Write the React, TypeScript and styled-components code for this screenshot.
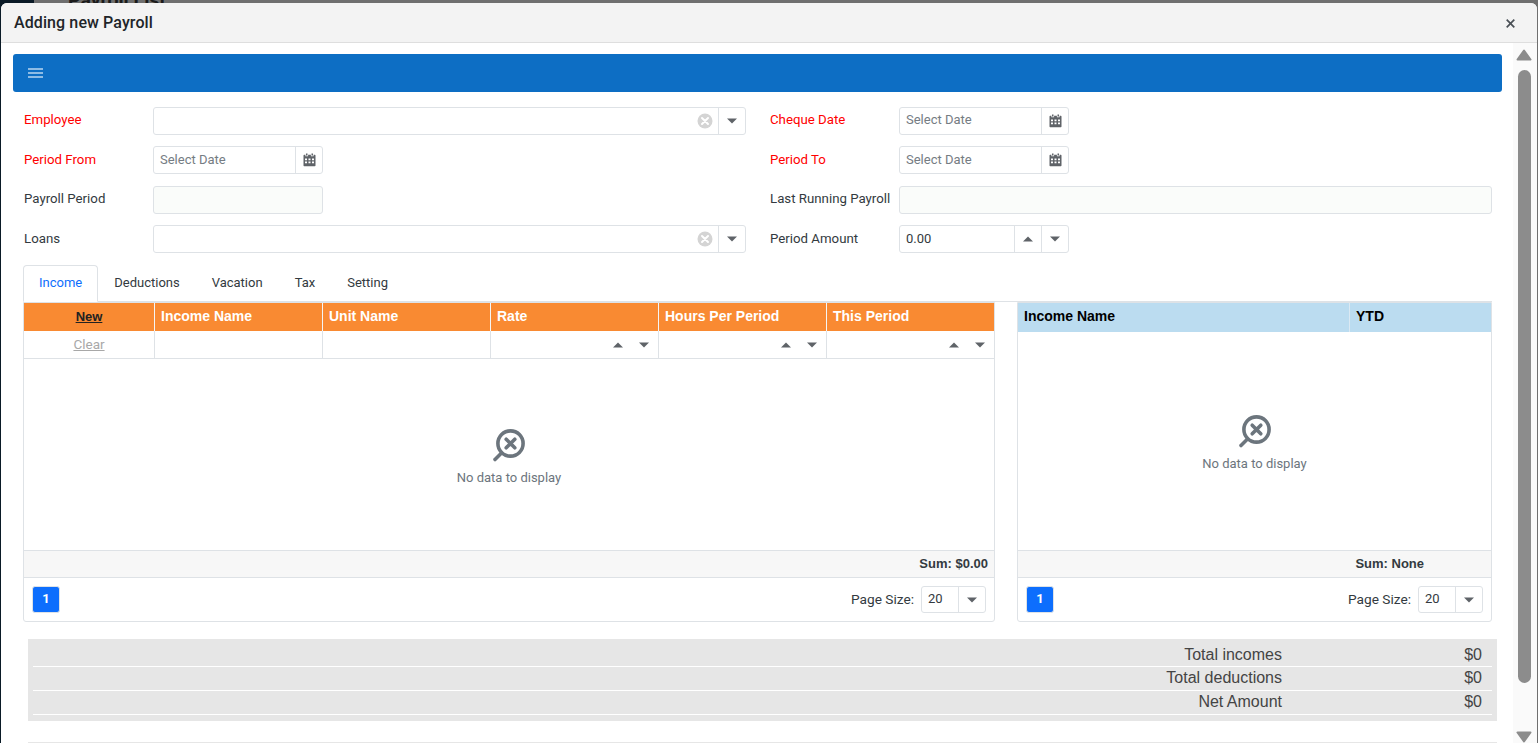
import styled, { createGlobalStyle } from "styled-components";

const GlobalStyle = createGlobalStyle`
  html, body {
    margin: 0;
    padding: 0;
    height: 100%;
    overflow: hidden;
    background-color: #6f6f6f;
    font-family: Roboto, "Liberation Sans", sans-serif;
    font-size: 13px;
    color: #333a40;
  }
  * {
    box-sizing: border-box;
  }
`;

const Caret = ({ up = false }: { up?: boolean }) => (
  <svg width="10" height="6" viewBox="0 0 10 6">
    <path d={up ? "M0 5.5 L5 0.5 L10 5.5 Z" : "M0 0.5 L10 0.5 L5 5.5 Z"} fill="#5f6368" />
  </svg>
);

const CalendarIcon = () => (
  <svg width="13" height="14" viewBox="0 0 13 14">
    <path
      d="M3 0.5h1.5v2H3zM8.5 0.5H10v2H8.5zM1.2 1.8H2.4v1.4h2.7V1.8h2.8v1.4h2.7V1.8h1.2c.4 0 .7.3.7.7v10c0 .5-.3.8-.7.8H1.2c-.4 0-.7-.3-.7-.8v-10c0-.4.3-.7.7-.7z"
      fill="#5f6368"
    />
    <path
      d="M2 5.6h2v1.7H2zM5.5 5.6h2v1.7h-2zM9 5.6h2v1.7H9zM2 8.5h2v1.7H2zM5.5 8.5h2v1.7h-2zM9 8.5h2v1.7H9z"
      fill="#ffffff"
    />
  </svg>
);

const ClearIcon = () => (
  <svg width="16" height="16" viewBox="0 0 16 16">
    <circle cx="8" cy="8" r="7.5" fill="#d4d4d4" />
    <path d="M5 5 L11 11 M11 5 L5 11" stroke="#ffffff" strokeWidth="2" strokeLinecap="round" />
  </svg>
);

const NoDataIcon = () => (
  <svg width="34" height="34" viewBox="0 0 34 34">
    <circle cx="18.5" cy="14.5" r="12.6" fill="none" stroke="#6c757d" strokeWidth="3.6" />
    <path d="M14.2 10.2 L22.8 18.8 M22.8 10.2 L14.2 18.8" stroke="#6c757d" strokeWidth="3.6" strokeLinecap="round" />
    <path d="M9.5 24 L3 30.5" stroke="#6c757d" strokeWidth="3.6" strokeLinecap="round" />
  </svg>
);

const SelectBox = () => (
  <Field $wide>
    <FieldInput />
    <ClearSlot>
      <ClearIcon />
    </ClearSlot>
    <FieldButton>
      <Caret />
    </FieldButton>
  </Field>
);

const DateBox = () => (
  <Field>
    <FieldInput>
      <Placeholder>Select Date</Placeholder>
    </FieldInput>
    <FieldButton>
      <CalendarIcon />
    </FieldButton>
  </Field>
);

const SpinCell = () => (
  <FilterCell>
    <SpinButton>
      <Caret up />
    </SpinButton>
    <SpinButton>
      <Caret />
    </SpinButton>
  </FilterCell>
);

const Pager = () => (
  <PagerRow>
    <PageButton>1</PageButton>
    <PageSize>
      <PageSizeLabel>Page Size:</PageSizeLabel>
      <PageSelect>
        <FieldInput>20</FieldInput>
        <FieldButton>
          <Caret />
        </FieldButton>
      </PageSelect>
    </PageSize>
  </PagerRow>
);

const App = () => {
  return (
    <>
      <GlobalStyle />
      <Backdrop>
        <Sidebar />
        <PageTitle>Payroll List</PageTitle>
      </Backdrop>
      <Modal>
        <ModalHeader>
          <ModalTitle>Adding new Payroll</ModalTitle>
          <CloseButton>
            <svg width="9" height="9" viewBox="0 0 9 9">
              <path d="M0.7 0.7 L8.3 8.3 M8.3 0.7 L0.7 8.3" stroke="#4a5056" strokeWidth="1.7" />
            </svg>
          </CloseButton>
        </ModalHeader>
        <ModalBody>
          <Content>
            <Toolbar>
              <svg width="15" height="10" viewBox="0 0 15 10">
                <path d="M0 1H15M0 5H15M0 9H15" stroke="#b9d6ef" strokeWidth="1.5" />
              </svg>
            </Toolbar>

            <Form>
              <FormRow>
                <Label $required>Employee</Label>
                <SelectBox />
                <Label $required>Cheque Date</Label>
                <DateBox />
              </FormRow>
              <FormRow>
                <Label $required>Period From</Label>
                <DateBox />
                <Label $required>Period To</Label>
                <DateBox />
              </FormRow>
              <FormRow>
                <Label>Payroll Period</Label>
                <ReadOnlyField />
                <Label>Last Running Payroll</Label>
                <ReadOnlyField $wide />
              </FormRow>
              <FormRow>
                <Label>Loans</Label>
                <SelectBox />
                <Label>Period Amount</Label>
                <Field>
                  <FieldInput>0.00</FieldInput>
                  <FieldButton>
                    <Caret up />
                  </FieldButton>
                  <FieldButton>
                    <Caret />
                  </FieldButton>
                </Field>
              </FormRow>
            </Form>

            <Tabs>
              <Tab $active>Income</Tab>
              <Tab>Deductions</Tab>
              <Tab>Vacation</Tab>
              <Tab>Tax</Tab>
              <Tab>Setting</Tab>
            </Tabs>

            <Grids>
              <Grid>
                <IncomeHeader>
                  <NewCell>New</NewCell>
                  <HeadCell>Income Name</HeadCell>
                  <HeadCell>Unit Name</HeadCell>
                  <HeadCell>Rate</HeadCell>
                  <HeadCell>Hours Per Period</HeadCell>
                  <HeadCell>This Period</HeadCell>
                </IncomeHeader>
                <FilterRow>
                  <ClearCell>Clear</ClearCell>
                  <FilterCell />
                  <FilterCell />
                  <SpinCell />
                  <SpinCell />
                  <SpinCell />
                </FilterRow>
                <EmptyPanel>
                  <NoDataIcon />
                  <EmptyText>No data to display</EmptyText>
                </EmptyPanel>
                <SumRow>
                  <SumText>Sum: $0.00</SumText>
                </SumRow>
                <Pager />
              </Grid>

              <Grid>
                <YtdHeader>
                  <YtdCell>Income Name</YtdCell>
                  <YtdCell>YTD</YtdCell>
                </YtdHeader>
                <EmptyPanel>
                  <NoDataIcon />
                  <EmptyText>No data to display</EmptyText>
                </EmptyPanel>
                <SumRow>
                  <YtdSum>Sum: None</YtdSum>
                </SumRow>
                <Pager />
              </Grid>
            </Grids>

            <Totals>
              <TotalRow>
                <TotalLabel>Total incomes</TotalLabel>
                <TotalValue>$0</TotalValue>
              </TotalRow>
              <TotalRow>
                <TotalLabel>Total deductions</TotalLabel>
                <TotalValue>$0</TotalValue>
              </TotalRow>
              <TotalRow>
                <TotalLabel>Net Amount</TotalLabel>
                <TotalValue>$0</TotalValue>
              </TotalRow>
            </Totals>
            <NextBar />
          </Content>

          <ScrollBar>
            <svg width="16" height="12" viewBox="0 0 16 12">
              <path d="M8 1.5 L14.5 10.5 H1.5 Z" fill="#8c8c8c" stroke="#8c8c8c" strokeWidth="2" strokeLinejoin="round" />
            </svg>
            <ScrollTrack>
              <ScrollThumb />
            </ScrollTrack>
            <svg width="16" height="12" viewBox="0 0 16 12">
              <path d="M1.5 1.5 H14.5 L8 10.5 Z" fill="#8c8c8c" stroke="#8c8c8c" strokeWidth="2" strokeLinejoin="round" />
            </svg>
          </ScrollBar>
        </ModalBody>
      </Modal>
    </>
  );
};

export default App;

const Backdrop = styled.div`
  display: flex;
  height: 743px;
  background-color: #6f6f6f;
`;

const Sidebar = styled.div`
  width: 34px;
  background-color: #0a1a26;
`;

const PageTitle = styled.div`
  margin: -11px 0 0 34px;
  font-size: 19.5px;
  font-weight: 700;
  line-height: 24px;
  color: #1b1b1b;
`;

const Modal = styled.div`
  position: fixed;
  top: 3px;
  left: 1px;
  width: 1536px;
  height: 740px;
  display: flex;
  flex-direction: column;
  background-color: #ffffff;
  border-radius: 6px 6px 0 0;
  overflow: hidden;
`;

const ModalHeader = styled.div`
  height: 40px;
  flex-shrink: 0;
  display: flex;
  align-items: center;
  justify-content: space-between;
  padding: 0 22px 0 13px;
  background-color: #f3f3f3;
  border-bottom: 1px solid #dedede;
`;

const ModalTitle = styled.div`
  font-size: 16px;
  font-weight: 500;
  letter-spacing: 0.1px;
  color: #212529;
`;

const CloseButton = styled.div`
  display: flex;
  padding-top: 2px;
`;

const ModalBody = styled.div`
  flex: 1;
  min-height: 0;
  display: flex;
`;

const Content = styled.div`
  width: 1512px;
  flex-shrink: 0;
  padding: 11px 0 0 12px;
  overflow: hidden;
`;

const ScrollBar = styled.div`
  width: 24px;
  display: flex;
  flex-direction: column;
  align-items: center;
  padding: 6px 2px 0 0;
  background-color: #fafafa;
`;

const ScrollTrack = styled.div`
  flex: 1;
  padding-top: 9px;
`;

const ScrollThumb = styled.div`
  width: 13px;
  height: 613px;
  background-color: #8c8c8c;
  border-radius: 7px;
`;

const Toolbar = styled.div`
  width: 1489px;
  height: 38px;
  display: flex;
  align-items: center;
  padding-left: 15px;
  background-color: #0d6ec4;
  border-radius: 3px;
`;

const Form = styled.div`
  display: flex;
  flex-direction: column;
  gap: 11.4px;
  padding: 15px 0 0 11px;
`;

const Label = styled.label<{ $required?: boolean }>`
  padding-bottom: 2px;
  font-size: 13.25px;
  color: ${(p) => (p.$required ? "#ff0000" : "#333a40")};
  white-space: nowrap;
`;

const FieldInput = styled.div`
  flex: 1;
  display: flex;
  align-items: center;
  padding: 0 0 2px 6px;
  font-size: 13px;
  color: #333a40;
`;

const FormRow = styled.div`
  display: grid;
  grid-template-columns: 129px 593px 24px 129px auto;
  align-items: center;
  height: 28px;

  & > :nth-child(3) {
    grid-column: 4;
  }

  /* the first row's texts sit a pixel higher in its boxes */
  &:first-child ${Label} {
    padding-bottom: 4px;
  }
  &:first-child ${FieldInput} {
    padding-bottom: 4px;
  }
`;

const Field = styled.div<{ $wide?: boolean }>`
  width: ${(p) => (p.$wide ? "593px" : "170px")};
  height: 28px;
  display: flex;
  align-items: stretch;
  background-color: #ffffff;
  border: 1px solid #dee2e6;
  border-radius: 3px;
`;

const Placeholder = styled.span`
  color: #757c83;
`;

const ClearSlot = styled.div`
  width: 26px;
  display: flex;
  align-items: center;
  justify-content: center;
`;

const FieldButton = styled.div`
  width: 27px;
  display: flex;
  align-items: center;
  justify-content: center;
  border-left: 1px solid #dee2e6;
`;

const ReadOnlyField = styled.div<{ $wide?: boolean }>`
  width: ${(p) => (p.$wide ? "593px" : "170px")};
  height: 28px;
  background-color: #fafcfa;
  border: 1px solid #dee2e6;
  border-radius: 3px;
`;

const Tabs = styled.div`
  display: flex;
  width: 1469px;
  height: 37px;
  margin: 12px 0 0 10px;
  border-bottom: 1px solid #dee2e6;
`;

const Tab = styled.div<{ $active?: boolean }>`
  height: 37px;
  display: flex;
  align-items: center;
  padding: 0 15px 2px;
  font-size: 13px;
  color: ${(p) => (p.$active ? "#0d6efd" : "#333a40")};
  background-color: ${(p) => (p.$active ? "#ffffff" : "transparent")};
  border: 1px solid ${(p) => (p.$active ? "#dee2e6" : "transparent")};
  border-bottom-color: ${(p) => (p.$active ? "#ffffff" : "transparent")};
  border-radius: 4px 4px 0 0;
`;

const Grids = styled.div`
  display: grid;
  grid-template-columns: 972px 475px;
  gap: 22px;
  margin: 0 0 0 10px;
`;

const Grid = styled.div`
  height: 320px;
  display: flex;
  flex-direction: column;
  border: 1px solid #dee2e6;
  border-radius: 0 0 3px 3px;
`;

const incomeColumns = "130px 168px 168px 168px 168px 168px";

const IncomeHeader = styled.div`
  display: grid;
  grid-template-columns: ${incomeColumns};
  height: 28px;
  flex-shrink: 0;
  background-color: #f98a32;
  font-family: "Liberation Sans", Arial, sans-serif;
`;

const HeadCell = styled.div`
  display: flex;
  align-items: center;
  padding: 0 0 2px 6px;
  font-size: 14px;
  font-weight: 700;
  color: #ffffff;
  border-left: 1px solid #f5f5f5;
`;

const NewCell = styled.div`
  display: flex;
  align-items: center;
  justify-content: center;
  padding-bottom: 2px;
  font-weight: 700;
  color: #222222;
  text-decoration: underline;
`;

const FilterRow = styled.div`
  display: grid;
  grid-template-columns: ${incomeColumns};
  height: 28px;
  flex-shrink: 0;
  border-bottom: 1px solid #dee2e6;
`;

const FilterCell = styled.div`
  display: flex;
  justify-content: flex-end;
  align-items: center;
  border-left: 1px solid #dee2e6;
  padding-right: 1px;
`;

const ClearCell = styled.div`
  display: flex;
  align-items: center;
  justify-content: center;
  padding-bottom: 2px;
  font-size: 13.5px;
  color: #a8a8a8;
  text-decoration: underline;
`;

const SpinButton = styled.div`
  width: 26px;
  display: flex;
  justify-content: center;
`;

const EmptyPanel = styled.div`
  flex: 1;
  display: flex;
  flex-direction: column;
  align-items: center;
  justify-content: center;
  gap: 7px;
  padding-top: 4px;
`;

const EmptyText = styled.div`
  font-size: 13px;
  color: #6c757d;
`;

const SumRow = styled.div`
  height: 28px;
  flex-shrink: 0;
  display: flex;
  align-items: center;
  justify-content: flex-end;
  padding-bottom: 2px;
  background-color: #f7f7f7;
  border-top: 1px solid #dee2e6;
  border-bottom: 1px solid #dee2e6;
`;

const SumText = styled.span`
  font-family: "Liberation Sans", Arial, sans-serif;
  font-size: 13px;
  font-weight: 700;
  padding-right: 6px;
`;

const YtdSum = styled(SumText)`
  padding-right: 67px;
`;

const PagerRow = styled.div`
  height: 43px;
  flex-shrink: 0;
  display: flex;
  align-items: flex-start;
  justify-content: space-between;
  padding: 8px 8px 0 8px;
`;

const PageButton = styled.div`
  width: 28px;
  height: 27px;
  display: flex;
  align-items: center;
  justify-content: center;
  padding-bottom: 2px;
  font-weight: 700;
  color: #ffffff;
  background-color: #0d6efd;
  border: 1px solid #dee2e6;
  border-radius: 3px;
`;

const PageSize = styled.div`
  display: flex;
  align-items: center;
  gap: 7px;
`;

const PageSizeLabel = styled.span`
  padding-bottom: 2px;
  font-size: 13.7px;
`;

const PageSelect = styled.div`
  width: 65px;
  height: 27px;
  display: flex;
  border: 1px solid #dee2e6;
  border-radius: 3px;
`;

const YtdHeader = styled.div`
  display: grid;
  grid-template-columns: 331px 142px;
  height: 29px;
  flex-shrink: 0;
  background-color: #bbdcf0;
`;

const YtdCell = styled.div`
  display: flex;
  align-items: center;
  padding: 0 0 3px 6px;
  font-family: "Liberation Sans", Arial, sans-serif;
  font-size: 14px;
  font-weight: 700;
  color: #000000;

  & + & {
    border-left: 1px solid #dbe9f3;
  }
`;

const Totals = styled.div`
  width: 1469px;
  display: flex;
  flex-direction: column;
  margin: 17px 0 0 15px;
  padding: 4px 5px 6px;
  background-color: #e6e6e6;
`;

const TotalRow = styled.div`
  display: grid;
  grid-template-columns: 1249px 200px;
  height: 24px;
  padding-bottom: 1px;
  align-items: center;
  border-bottom: 1px solid #ffffff;
  font-family: "Liberation Sans", Arial, sans-serif;
  font-size: 16px;
  color: #444444;

  &:first-child {
    padding-bottom: 0;
  }
`;

const TotalLabel = styled.div`
  text-align: right;
`;

const TotalValue = styled.div`
  text-align: right;
`;

const NextBar = styled.div`
  width: 1469px;
  height: 3px;
  margin: 21px 0 0 15px;
  background-color: #e6e6e6;
`;
